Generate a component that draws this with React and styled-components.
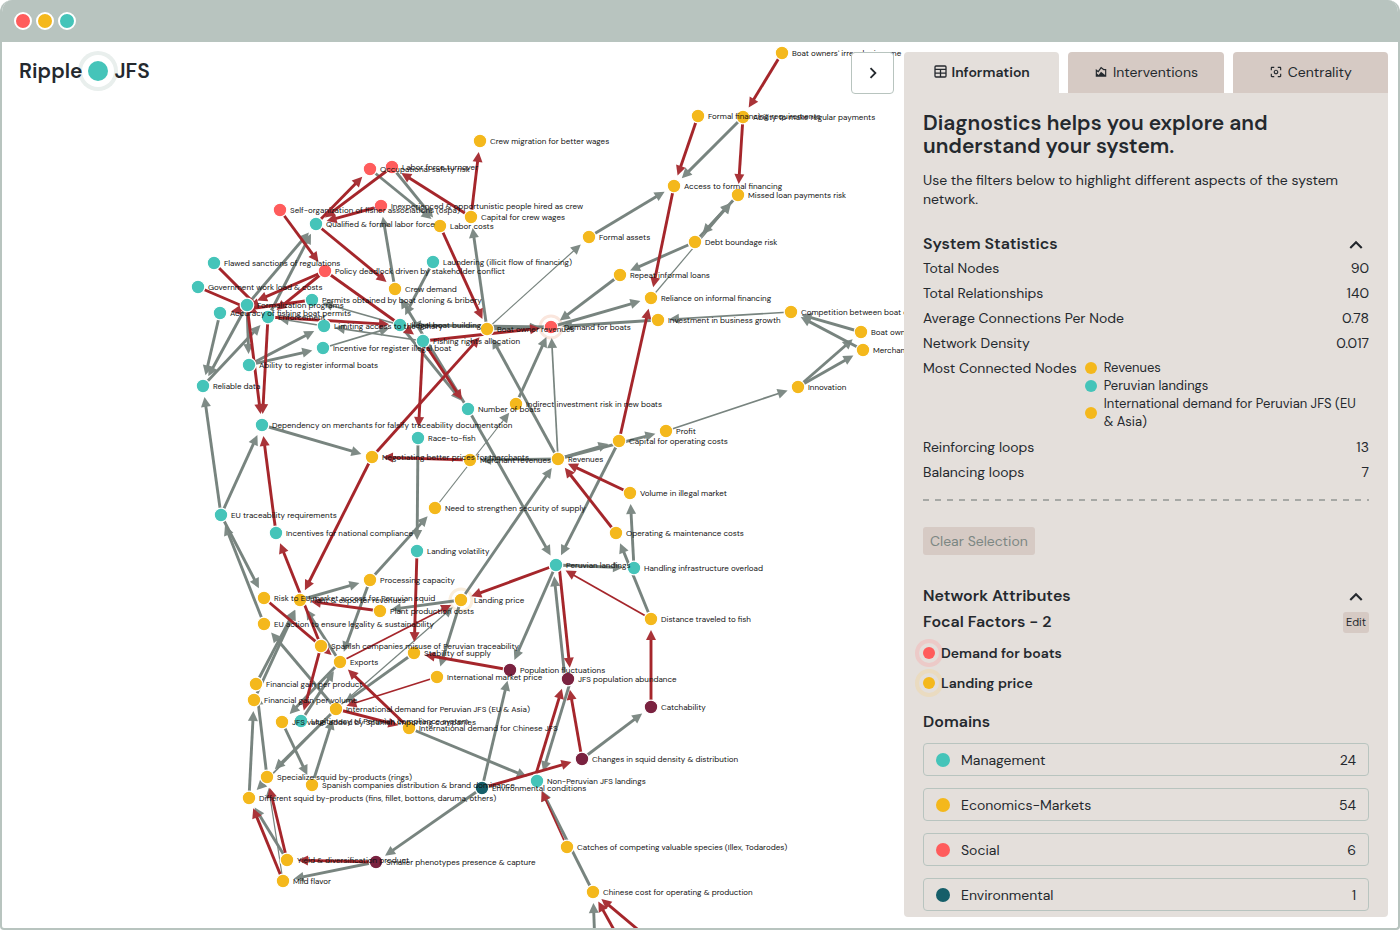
import React from "react";
import styled, { createGlobalStyle } from "styled-components";
import {
  MdOutlineAreaChart,
  MdCenterFocusWeak,
  MdExpandLess,
  MdChevronRight,
} from "react-icons/md";

const color = {
  frame: "#b8c4bf",
  panel: "#e4dfdb",
  tab: "#d6cac4",
  text: "#24292e",
  muted: "#7c8783",
  management: "#45c4b9",
  economics: "#f4b81c",
  social: "#ff5c5c",
  environmental: "#155e69",
  biological: "#7a2240",
};

const GlobalStyle = createGlobalStyle`
  *, *::before, *::after { box-sizing: border-box; }
  body {
    margin: 0;
    background: #fff;
    color: ${color.text};
    font-family: "DM Sans", Inter, "Liberation Sans", sans-serif;
    font-size: 14px;
  }
  h1, h2, h3, p, ul, dl, dd { margin: 0; padding: 0; }
  ul { list-style: none; }
  button { font: inherit; color: inherit; cursor: pointer; }
`;

const Window = styled.div`
  display: flex;
  flex-direction: column;
  height: 100vh;
  border: solid ${color.frame};
  border-width: 0 2px 2px;
  border-radius: 12px 12px 4px 4px;
  overflow: hidden;
`;

const TitleBar = styled.header`
  display: flex;
  align-items: center;
  gap: 4px;
  flex: none;
  height: 42px;
  padding: 0 12px;
  background: ${color.frame};
`;

const WindowDot = styled.span`
  width: 18px;
  height: 18px;
  border: 2px solid #fff;
  border-radius: 50%;
  background: ${(p) => p.$color};
`;

const Workspace = styled.main`
  display: grid;
  grid-template-columns: minmax(0, 1fr) 484px;
  flex: 1;
  min-height: 0;
  padding-right: 10px;
`;

const Canvas = styled.section`
  position: relative;
  overflow: hidden;
`;

const CanvasHeader = styled.div`
  position: relative;
  display: flex;
  align-items: flex-start;
  justify-content: space-between;
  padding: 10px 10px 0 17px;
`;

const Brand = styled.div`
  display: flex;
  align-items: center;
  gap: 6px;
  height: 38px;
  font-size: 21px;
  font-weight: 600;
`;

const BrandDot = styled.span`
  width: 20px;
  height: 20px;
  border-radius: 50%;
  background: ${color.management};
  box-shadow: 0 0 0 6px #fff, 0 0 0 10px #e9efed;
`;

const BrandText = styled.span`
  position: relative;
`;

const CollapseButton = styled.button`
  display: grid;
  place-items: center;
  width: 43px;
  height: 42px;
  padding: 0;
  border: 1px solid ${color.frame};
  border-radius: 4px;
  background: #fff;
  font-size: 22px;
`;

const Graph = styled.svg`
  position: absolute;
  inset: 0;
  width: 100%;
  height: 100%;
  font-size: 8px;
  fill: #111;
`;

const Sidebar = styled.aside`
  display: flex;
  flex-direction: column;
  min-height: 0;
  padding: 10px 0 11px;
`;

const Tabs = styled.div`
  display: grid;
  grid-template-columns: repeat(3, 1fr);
  gap: 9px;
  flex: none;
`;

const Tab = styled.button`
  display: flex;
  align-items: center;
  justify-content: center;
  gap: 5px;
  height: 41px;
  padding: 0 0 2px;
  border: 0;
  border-radius: 4px 4px 0 0;
  background: ${(p) => (p.$active ? color.panel : color.tab)};
  font-weight: ${(p) => (p.$active ? 600 : 400)};
`;

const Panel = styled.div`
  flex: 1;
  min-height: 0;
  overflow: hidden;
  padding: 19px 19px 5px;
  border-radius: 0 0 4px 4px;
  background: ${color.panel};
`;

const Title = styled.h1`
  max-width: 400px;
  font-size: 21px;
  line-height: 23px;
  font-weight: 600;
`;

const Intro = styled.p`
  margin-top: 13px;
  line-height: 19px;
`;

const SectionHeader = styled.div`
  display: flex;
  align-items: center;
  justify-content: space-between;
  height: 24px;
  margin-top: ${(p) => p.$top}px;
`;

const SectionTitle = styled.h2`
  font-size: 16px;
  line-height: 24px;
  font-weight: 600;
`;

const IconButton = styled.button`
  display: grid;
  place-items: center;
  height: 24px;
  padding: 0 0 4px;
  border: 0;
  background: none;
  font-size: 26px;
`;

const Stats = styled.dl`
  display: grid;
  gap: 7px;
  margin-top: 3px;
  line-height: 18px;
`;

const Stat = styled.div`
  display: flex;
  justify-content: space-between;
  gap: 8px;
`;

const StatName = styled.dt`
  flex: none;
`;

const NodeList = styled.ul`
  padding-right: 8px;
  font-size: 13px;
`;

const NodeItem = styled.li`
  display: flex;
  align-items: center;
  gap: 7px;
`;

const Dot = styled.span`
  flex: none;
  width: ${(p) => p.$size}px;
  height: ${(p) => p.$size}px;
  border-radius: 50%;
  background: ${(p) => p.$color};
  box-shadow: ${(p) => (p.$ring ? `0 0 0 4px ${color.panel}, 0 0 0 8px ${p.$ring}` : "none")};
`;

const Divider = styled.hr`
  height: 2px;
  margin: 18px 0 26px;
  border: 0;
  background: repeating-linear-gradient(90deg, #a6a8a5 0 6px, transparent 6px 12px);
`;

const ClearButton = styled.button`
  display: block;
  height: 28px;
  padding: 0 7px;
  border: 0;
  border-radius: 3px;
  background: ${color.tab};
  color: ${color.muted};
`;

const EditButton = styled.button`
  height: 21px;
  padding: 0 3px;
  border: 0;
  border-radius: 3px;
  background: ${color.tab};
  font-size: 11px;
`;

const FocalList = styled.ul`
  display: grid;
  gap: 10px;
  margin-top: 9px;
`;

const FocalItem = styled.li`
  display: flex;
  align-items: center;
  gap: 6px;
  line-height: 20px;
  font-weight: 600;
`;

const FocalName = styled.span`
  position: relative;
`;

const DomainList = styled.ul`
  display: grid;
  gap: 12px;
  margin-top: 9px;
`;

const DomainButton = styled.button`
  display: flex;
  align-items: center;
  gap: 11px;
  width: 100%;
  height: 33px;
  padding: 0 12px;
  border: 1px solid ${color.frame};
  border-radius: 4px;
  background: transparent;
`;

const DomainCount = styled.span`
  margin-left: auto;
`;

const M = color.management;
const E = color.economics;
const S = color.social;
const V = color.environmental;
const B = color.biological;

const nodes = {
  irregular: [782, 53, E, "Boat owners' irregular income"],
  formalReq: [698, 116, E, "Formal financing requirements"],
  payments: [743, 117, E, "Ability to make regular payments"],
  crewMigration: [480, 141, E, "Crew migration for better wages"],
  safety: [370, 169, S, "Occupational safety risk"],
  turnover: [392, 167, S, "Labor force turnover"],
  access: [674, 186, E, "Access to formal financing"],
  missed: [738, 195, E, "Missed loan payments risk"],
  self: [280, 210, S, "Self-organization of fisher associations (ospa)"],
  inexperienced: [381, 206, S, "Inexperienced & opportunistic people hired as crew"],
  crewCapital: [471, 217, E, "Capital for crew wages"],
  qualified: [316, 224, M, "Qualified & formal labor force"],
  laborCosts: [440, 226, E, "Labor costs"],
  assets: [589, 237, E, "Formal assets"],
  debt: [695, 242, E, "Debt boundage risk"],
  laundering: [433, 262, M, "Laundering (illicit flow of financing)"],
  flawed: [214, 263, M, "Flawed sanctions of regulations"],
  policy: [325, 271, S, "Policy deadlock driven by stakeholder conflict"],
  repeat: [620, 275, E, "Repeat informal loans"],
  government: [198, 287, M, "Government work load & costs"],
  crewDemand: [395, 289, E, "Crew demand"],
  reliance: [651, 298, E, "Reliance on informal financing"],
  permits: [312, 300, M, "Permits obtained by boat cloning & bribery"],
  formalization: [247, 305, M, "Formalization programs"],
  accuracy: [220, 313, M, "Accuracy of fishing boat permits"],
  enforcement: [268, 317, M, "Enforcement"],
  investment: [658, 320, E, "Investment in business growth"],
  competition: [791, 312, E, "Competition between boat owners"],
  limiting: [324, 326, M, "Limiting access to the fishery"],
  boatBuilding: [400, 325, M, "Illegal boat building"],
  boatRevenue: [487, 329, E, "Boat owner revenues"],
  demand: [551, 327, S, "Demand for boats", "#fae6dd"],
  boatOwners: [861, 332, E, "Boat owners' efficiency"],
  merchants: [863, 350, E, "Merchants' efficiency"],
  rights: [423, 341, M, "Fishing rights allocation"],
  incentiveBoat: [323, 348, M, "Incentive for register illegal boat"],
  register: [249, 365, M, "Ability to register informal boats"],
  reliable: [203, 386, M, "Reliable data"],
  innovation: [798, 387, E, "Innovation"],
  indirect: [516, 404, E, "Indirect investment risk in new boats"],
  boats: [468, 409, M, "Number of boats"],
  dependency: [262, 425, M, "Dependency on merchants for falsify traceability documentation"],
  profit: [666, 431, E, "Profit"],
  race: [418, 438, M, "Race-to-fish"],
  opCapital: [619, 441, E, "Capital for operating costs"],
  negotiating: [372, 457, E, "Negotiating better prices for merchants"],
  merchantRevenue: [470, 460, E, "Merchant revenues"],
  revenues: [558, 459, E, "Revenues"],
  volume: [630, 493, E, "Volume in illegal market"],
  supplyNeed: [435, 508, E, "Need to strengthen security of supply"],
  euTrace: [221, 515, M, "EU traceability requirements"],
  incentives: [276, 533, M, "Incentives for national compliance"],
  opCosts: [616, 533, E, "Operating & maintenance costs"],
  volatility: [417, 551, M, "Landing volatility"],
  landings: [556, 565, M, "Peruvian landings"],
  handling: [634, 568, M, "Handling infrastructure overload"],
  processing: [370, 580, E, "Processing capacity"],
  risk: [264, 598, E, "Risk to EU market access for Peruvian squid"],
  plantRevenue: [300, 600, E, "Plant & exporter revenues"],
  landingPrice: [461, 600, E, "Landing price", "#faeedd"],
  plantCosts: [380, 611, E, "Plant production costs"],
  distance: [651, 619, E, "Distance traveled to fish"],
  euAction: [264, 624, E, "EU action to ensure legality & sustainability"],
  misuse: [321, 646, E, "Spanish companies misuse of Peruvian traceability"],
  stability: [414, 653, E, "Stability of supply"],
  exports: [340, 662, E, "Exports"],
  population: [510, 670, B, "Population fluctuations"],
  marketPrice: [437, 677, E, "International market price"],
  abundance: [568, 679, B, "JFS population abundance"],
  gainProduct: [256, 684, E, "Financial gain per product"],
  gainVolume: [254, 700, E, "Financial gain per volume"],
  catchability: [651, 707, B, "Catchability"],
  intlDemand: [336, 709, E, "International demand for Peruvian JFS (EU & Asia)"],
  jfsValue: [282, 722, E, "JFS value added by Spanish importing companies"],
  legitimacy: [301, 721, M, "Legitimacy of Peruvian compliance system"],
  chineseDemand: [409, 728, E, "International demand for Chinese JFS"],
  changes: [582, 759, B, "Changes in squid density & distribution"],
  specialize: [267, 777, E, "Specialize squid by-products (rings)"],
  nonPeruvian: [537, 781, M, "Non-Peruvian JFS landings"],
  spanishDist: [312, 785, E, "Spanish companies distribution & brand dominance"],
  conditions: [482, 788, V, "Environmental conditions"],
  different: [249, 798, E, "Different squid by-products (fins, fillet, bottons, daruma, others)"],
  catches: [567, 847, E, "Catches of competing valuable species (Illex, Todarodes)"],
  yield: [287, 860, E, "Yield & diversification product"],
  smaller: [376, 862, B, "Smaller phenotypes presence & capture"],
  mild: [283, 881, E, "Mild flavor"],
  chineseCost: [593, 892, E, "Chinese cost for operating & production"],
  subsidies: [597, 1000, E, ""],
  fuel: [653, 1000, E, ""],
  wages: [710, 990, E, ""],
};

// Each link: source, target, line width, sideways shift for two-way pairs.
const positive = [
  ["safety", "laborCosts"], ["turnover", "laborCosts"], ["crewDemand", "inexperienced"],
  ["boatRevenue", "crewCapital"], ["boatRevenue", "assets", 1], ["assets", "access"],
  ["formalization", "qualified"], ["enforcement", "qualified"], ["formalization", "register"],
  ["accuracy", "reliable"], ["formalization", "reliable"], ["reliable", "enforcement"],
  ["boatBuilding", "permits", 2], ["limiting", "enforcement", 2], ["rights", "limiting", 2],
  ["register", "limiting"], ["register", "incentiveBoat"], ["incentiveBoat", "boatBuilding", 2],
  ["laundering", "boatBuilding"], ["boats", "crewDemand"], ["boatBuilding", "boats"],
  ["boatRevenue", "demand"], ["demand", "boatBuilding"], ["race", "volatility"],
  ["revenues", "merchantRevenue"], ["dependency", "negotiating"], ["revenues", "boatRevenue"],
  ["revenues", "demand", 2], ["revenues", "opCapital"], ["revenues", "profit"],
  ["opCapital", "landings"], ["profit", "innovation", 2], ["innovation", "boatOwners"],
  ["innovation", "merchants"], ["boatOwners", "competition"], ["merchants", "competition"],
  ["competition", "investment", 2], ["investment", "demand"], ["demand", "reliance"],
  ["repeat", "demand"], ["debt", "repeat"], ["missed", "debt"], ["reliance", "missed", 1],
  ["debt", "missed"], ["payments", "access"], ["indirect", "demand"], ["boats", "landings"],
  ["landingPrice", "revenues"], ["supplyNeed", "indirect", 1], ["processing", "supplyNeed"],
  ["processing", "exports"], ["handling", "volume"], ["distance", "opCosts"],
  ["landings", "handling"], ["landings", "population"], ["conditions", "population"],
  ["conditions", "smaller"], ["smaller", "mild"], ["yield", "different"],
  ["mild", "specialize", 1], ["different", "gainVolume"], ["specialize", "gainProduct"],
  ["gainVolume", "plantRevenue"], ["gainProduct", "plantRevenue"], ["euAction", "euTrace"],
  ["euTrace", "risk"], ["euTrace", "reliable"], ["euTrace", "dependency"],
  ["landingPrice", "plantCosts"], ["plantRevenue", "processing"], ["exports", "plantRevenue"],
  ["landingPrice", "marketPrice"], ["intlDemand", "landingPrice", 1], ["stability", "intlDemand"],
  ["chineseDemand", "nonPeruvian"], ["intlDemand", "euAction"], ["intlDemand", "specialize"],
  ["intlDemand", "different", 2], ["exports", "jfsValue"], ["legitimacy", "exports"],
  ["jfsValue", "spanishDist"], ["spanishDist", "intlDemand"], ["changes", "catchability"],
  ["abundance", "nonPeruvian", 3, -3], ["abundance", "landings", 3, -3],
  ["chineseCost", "nonPeruvian"], ["subsidies", "chineseCost"],
];

const negative = [
  ["crewCapital", "turnover"], ["crewCapital", "crewMigration"], ["qualified", "safety"],
  ["turnover", "qualified"], ["inexperienced", "qualified"], ["self", "policy"],
  ["qualified", "crewDemand"], ["laborCosts", "boatRevenue"], ["policy", "formalization"],
  ["policy", "enforcement"], ["policy", "rights"], ["flawed", "enforcement"],
  ["government", "enforcement"], ["formalization", "dependency"], ["enforcement", "dependency"],
  ["permits", "accuracy"], ["enforcement", "boatBuilding"], ["rights", "boats"],
  ["rights", "demand"], ["rights", "race"], ["volatility", "stability"],
  ["negotiating", "boatRevenue"], ["negotiating", "plantRevenue"],
  ["merchantRevenue", "negotiating"], ["opCapital", "reliance"], ["payments", "missed"],
  ["formalReq", "access"], ["access", "reliance"], ["irregular", "payments"],
  ["volume", "revenues"], ["opCosts", "revenues"], ["distance", "landings", 2],
  ["landings", "landingPrice"], ["population", "stability"], ["conditions", "changes"],
  ["smaller", "yield"], ["yield", "specialize"], ["mild", "different"],
  ["incentives", "dependency"], ["misuse", "incentives"], ["risk", "exports"],
  ["misuse", "legitimacy"], ["plantCosts", "plantRevenue"], ["exports", "landingPrice", 2],
  ["marketPrice", "intlDemand", 2], ["intlDemand", "chineseDemand"],
  ["chineseDemand", "exports"], ["catchability", "distance"], ["changes", "abundance"],
  ["nonPeruvian", "abundance", 3, -3], ["landings", "abundance", 3, -3],
  ["catches", "nonPeruvian", 2], ["fuel", "chineseCost"], ["wages", "chineseCost"],
];

const lineWidth = { 1: 1.2, 2: 1.7, 3: 2.9 };

function Link({ link, stroke, head }) {
  const [from, to, width = 3, shift = 0] = link;
  const [x1, y1] = nodes[from];
  const [x2, y2] = nodes[to];
  const length = Math.hypot(x2 - x1, y2 - y1);
  const ux = (x2 - x1) / length;
  const uy = (y2 - y1) / length;
  const ox = -uy * shift;
  const oy = ux * shift;
  const at = (back, side) =>
    [x2 + ox - ux * back - uy * side, y2 + oy - uy * back + ux * side].map((n) => n.toFixed(1));
  const [bx, by] = at(19, 0);
  return (
    <g>
      <line x1={x1 + ox} y1={y1 + oy} x2={bx} y2={by} stroke={stroke} strokeWidth={lineWidth[width]} />
      <polygon points={`${at(11, 0)} ${at(21, 5)} ${at(21, -5)}`} fill={head} />
    </g>
  );
}

function NetworkGraph() {
  const list = Object.entries(nodes);
  return (
    <Graph role="img" aria-label="System network">
      <g transform="translate(-2 -42)">
        {list.map(([id, [x, y, , , halo]]) =>
          halo ? <circle key={id} cx={x} cy={y} r="11" fill="none" stroke={halo} strokeWidth="3" /> : null
        )}
        {positive.map((l) => (
          <Link key={l.slice(0, 2).join()} link={l} stroke="#78847f" head="#7f8b86" />
        ))}
        {negative.map((l) => (
          <Link key={l.slice(0, 2).join()} link={l} stroke="#a5262b" head="#a93338" />
        ))}
        {list.map(([id, [x, y, fill]]) => (
          <circle key={id} cx={x} cy={y} r="6.8" fill={fill} stroke="#fff" strokeWidth="1.2" />
        ))}
        {list.map(([id, [x, y, , label, halo]]) =>
          label ? (
            <text key={id} x={x + (halo ? 13 : 10)} y={y + 3}>
              {label}
            </text>
          ) : null
        )}
      </g>
    </Graph>
  );
}

function TableIcon() {
  return (
    <svg width="13" height="13" viewBox="0 0 13 13" fill="none" stroke="currentColor" strokeWidth="1.3" aria-hidden="true">
      <rect x="1" y="1" width="11" height="11" rx="1" />
      <path d="M1 4.4h11M1 8.2h11M6.5 4.4V12" />
    </svg>
  );
}

const connected = [
  ["Revenues", E],
  ["Peruvian landings", M],
  ["International demand for Peruvian JFS (EU & Asia)", E],
];

const domains = [
  ["Management", 24, M],
  ["Economics-Markets", 54, E],
  ["Social", 6, S],
  ["Environmental", 1, V],
];

function StatRow({ name, children }) {
  return (
    <Stat>
      <StatName>{name}</StatName>
      <dd>{children}</dd>
    </Stat>
  );
}

export default function App() {
  return (
    <>
      <GlobalStyle />
      <Window>
        <TitleBar>
          <WindowDot $color={S} />
          <WindowDot $color={E} />
          <WindowDot $color={M} />
        </TitleBar>
        <Workspace>
          <Canvas>
            <NetworkGraph />
            <CanvasHeader>
              <Brand>
                <BrandText>Ripple</BrandText>
                <BrandDot />
                <BrandText>JFS</BrandText>
              </Brand>
              <CollapseButton type="button" aria-label="Collapse panel">
                <MdChevronRight />
              </CollapseButton>
            </CanvasHeader>
          </Canvas>
          <Sidebar>
            <Tabs role="tablist">
              <Tab type="button" role="tab" aria-selected="true" $active>
                <TableIcon /> Information
              </Tab>
              <Tab type="button" role="tab" aria-selected="false">
                <MdOutlineAreaChart /> Interventions
              </Tab>
              <Tab type="button" role="tab" aria-selected="false">
                <MdCenterFocusWeak /> Centrality
              </Tab>
            </Tabs>
            <Panel role="tabpanel">
              <Title>Diagnostics helps you explore and understand your system.</Title>
              <Intro>Use the filters below to highlight different aspects of the system network.</Intro>

              <SectionHeader $top={23}>
                <SectionTitle>System Statistics</SectionTitle>
                <IconButton type="button" aria-label="Collapse system statistics">
                  <MdExpandLess />
                </IconButton>
              </SectionHeader>
              <Stats>
                <StatRow name="Total Nodes">90</StatRow>
                <StatRow name="Total Relationships">140</StatRow>
                <StatRow name="Average Connections Per Node">0.78</StatRow>
                <StatRow name="Network Density">0.017</StatRow>
                <StatRow name="Most Connected Nodes">
                  <NodeList>
                    {connected.map(([name, fill]) => (
                      <NodeItem key={name}>
                        <Dot $size={12} $color={fill} />
                        {name}
                      </NodeItem>
                    ))}
                  </NodeList>
                </StatRow>
                <StatRow name="Reinforcing loops">13</StatRow>
                <StatRow name="Balancing loops">7</StatRow>
              </Stats>

              <Divider />
              <ClearButton type="button">Clear Selection</ClearButton>

              <SectionHeader $top={29}>
                <SectionTitle>Network Attributes</SectionTitle>
                <IconButton type="button" aria-label="Collapse network attributes">
                  <MdExpandLess />
                </IconButton>
              </SectionHeader>
              <SectionHeader $top={2}>
                <SectionTitle as="h3">Focal Factors - 2</SectionTitle>
                <EditButton type="button">Edit</EditButton>
              </SectionHeader>
              <FocalList>
                <FocalItem>
                  <Dot $size={12} $color={S} $ring="#eccac8" />
                  <FocalName>Demand for boats</FocalName>
                </FocalItem>
                <FocalItem>
                  <Dot $size={12} $color={E} $ring="#eadbc0" />
                  <FocalName>Landing price</FocalName>
                </FocalItem>
              </FocalList>

              <SectionHeader $top={17}>
                <SectionTitle as="h3">Domains</SectionTitle>
              </SectionHeader>
              <DomainList>
                {domains.map(([name, count, fill]) => (
                  <li key={name}>
                    <DomainButton type="button">
                      <Dot $size={14} $color={fill} />
                      {name}
                      <DomainCount>{count}</DomainCount>
                    </DomainButton>
                  </li>
                ))}
              </DomainList>
            </Panel>
          </Sidebar>
        </Workspace>
      </Window>
    </>
  );
}
